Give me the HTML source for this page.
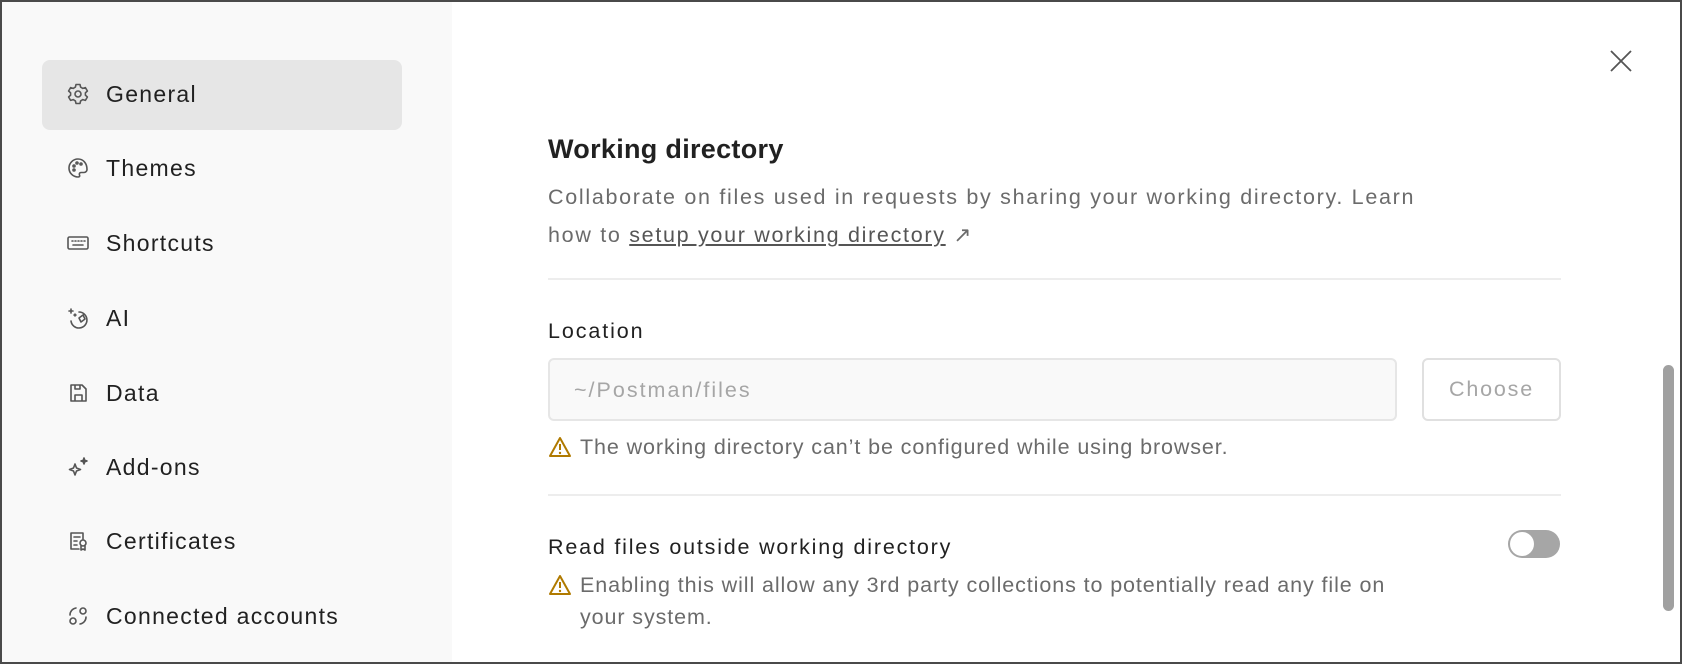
<!DOCTYPE html>
<html><head><meta charset="utf-8"><style>
*{margin:0;padding:0;box-sizing:border-box}
body{width:1682px;height:664px;overflow:hidden;font-family:"Liberation Sans",sans-serif;background:#fff;position:relative}
.frame{position:absolute;inset:0;border:2px solid #4a4a4a;pointer-events:none;z-index:9}
.side{position:absolute;left:0;top:0;width:452px;height:664px;background:#f9f9f9}
.act{position:absolute;left:42px;top:60px;width:360px;height:70px;background:#e6e6e6;border-radius:8px}
.it{position:absolute;left:66px;height:30px;display:flex;align-items:center;font-size:23px;color:#212121;letter-spacing:1.3px}
.it svg{width:24px;height:24px;margin-right:16px;fill:none;stroke:#555;stroke-width:1.6;stroke-linecap:round;stroke-linejoin:round}
.t{position:absolute;white-space:nowrap}
.sub{color:#6b6b6b;font-size:21.5px;letter-spacing:1.7px}
.w{letter-spacing:0.9px}
.hr{position:absolute;left:548px;width:1013px;height:2px;background:#ededed}
.warn{width:24px;height:22px}
</style></head><body>
<div class="frame"></div>
<div class="side">
<div class="act"></div>
<div class="it" style="top:79px"><svg viewBox="0 0 24 24"><circle cx="12" cy="12" r="3"/><path d="M10 2.5h4l.6 2.6 2.2 1.3 2.6-.8 2 3.4-2 1.8v2.4l2 1.8-2 3.4-2.6-.8-2.2 1.3-.6 2.6h-4l-.6-2.6-2.2-1.3-2.6.8-2-3.4 2-1.8v-2.4l-2-1.8 2-3.4 2.6.8 2.2-1.3z"/></svg>General</div>
<div class="it" style="top:153px"><svg viewBox="0 0 24 24"><path d="M12 3a9 9 0 1 0 0 18c1.5 0 2-1 1.5-2-.6-1.2.2-2.5 1.5-2.5H18a3 3 0 0 0 3-3C21 7 17 3 12 3z"/><circle cx="8" cy="10" r="1"/><circle cx="11" cy="7" r="1"/><circle cx="15" cy="8" r="1"/><circle cx="8" cy="14" r="1"/></svg>Themes</div>
<div class="it" style="top:228px"><svg viewBox="0 0 24 24"><rect x="2" y="6" width="20" height="12" rx="1.5"/><path d="M6 10h1M9 10h1M12 10h1M15 10h1M18 10h1M7 14h10"/></svg>Shortcuts</div>
<div class="it" style="top:303px"><svg viewBox="0 0 24 24"><path d="M13 6a8 8 0 1 1-8 9M13 12l4-3 2 4-4 3z"/><path d="M5 3v4M3 5h4M9 8v2M8 9h2"/></svg>AI</div>
<div class="it" style="top:378px"><svg viewBox="0 0 24 24"><path d="M5 4h11l4 4v12H5zM9 20v-6h7v6M9 4v4h5V4"/></svg>Data</div>
<div class="it" style="top:452px"><svg viewBox="0 0 24 24"><path d="M9 9l1.5 4 4 1.5-4 1.5L9 20l-1.5-4-4-1.5 4-1.5z"/><path d="M18 3l.8 2.2L21 6l-2.2.8L18 9l-.8-2.2L15 6l2.2-.8z" fill="#555"/></svg>Add-ons</div>
<div class="it" style="top:526px"><svg viewBox="0 0 24 24"><path d="M13 20H5V4h12v6M8 8h6M8 12h3M8 16h3"/><circle cx="17" cy="14" r="3"/><path d="M15 17v4l2-1 2 1v-4"/></svg>Certificates</div>
<div class="it" style="top:601px"><svg viewBox="0 0 24 24"><circle cx="7" cy="17" r="3"/><circle cx="17" cy="7" r="3"/><path d="M4 11a7 7 0 0 1 6-7M20 13a7 7 0 0 1-6 7"/></svg>Connected accounts</div>
</div>
<svg style="position:absolute;left:1609px;top:49px" width="24" height="24" viewBox="0 0 24 24"><path d="M2 2l20 20M22 2L2 22" stroke="#555" stroke-width="1.8"/></svg>
<div class="t" style="left:548px;top:134px;font-size:27px;font-weight:bold;color:#212121;letter-spacing:0.3px">Working directory</div>
<div class="t sub" style="left:548px;top:185px">Collaborate on files used in requests by sharing your working directory. Learn</div>
<div class="t sub" style="left:548px;top:223px">how to <span style="text-decoration:underline;color:#555">setup your working directory</span> ↗</div>
<div class="hr" style="top:278px"></div>
<div class="t" style="left:548px;top:319px;font-size:21.5px;color:#212121;letter-spacing:1.9px">Location</div>
<div style="position:absolute;left:548px;top:358px;width:849px;height:63px;background:#f9f9f9;border:2px solid #e6e6e6;border-radius:6px"></div>
<div class="t" style="left:574px;top:378px;font-size:21.5px;color:#a6a6a6;letter-spacing:2px">~/Postman/files</div>
<div style="position:absolute;left:1422px;top:358px;width:139px;height:63px;border:2px solid #e0e0e0;border-radius:6px;display:flex;align-items:center;justify-content:center;font-size:21.5px;color:#a6a6a6;letter-spacing:1.8px">Choose</div>
<svg class="warn" style="position:absolute;left:548px;top:436px" viewBox="0 0 24 22"><path d="M12 2L22 20H2z" fill="none" stroke="#b07a00" stroke-width="2" stroke-linejoin="round"/><path d="M12 8v6" stroke="#b07a00" stroke-width="2"/><circle cx="12" cy="17" r="1.2" fill="#b07a00"/></svg>
<div class="t sub w" style="left:580px;top:435px">The working directory can’t be configured while using browser.</div>
<div class="hr" style="top:494px"></div>
<div class="t" style="left:548px;top:535px;font-size:21.5px;color:#212121;letter-spacing:1.8px">Read files outside working directory</div>
<div style="position:absolute;left:1508px;top:530px;width:52px;height:28px;border-radius:14px;background:#a6a6a6"><div style="position:absolute;left:2px;top:2px;width:24px;height:24px;border-radius:50%;background:#fff"></div></div>
<svg class="warn" style="position:absolute;left:548px;top:574px" viewBox="0 0 24 22"><path d="M12 2L22 20H2z" fill="none" stroke="#b07a00" stroke-width="2" stroke-linejoin="round"/><path d="M12 8v6" stroke="#b07a00" stroke-width="2"/><circle cx="12" cy="17" r="1.2" fill="#b07a00"/></svg>
<div class="t sub w" style="left:580px;top:573px">Enabling this will allow any 3rd party collections to potentially read any file on</div>
<div class="t sub w" style="left:580px;top:605px">your system.</div>
<div style="position:absolute;left:1663px;top:365px;width:11px;height:246px;border-radius:6px;background:#a0a0a0"></div>
</body></html>
